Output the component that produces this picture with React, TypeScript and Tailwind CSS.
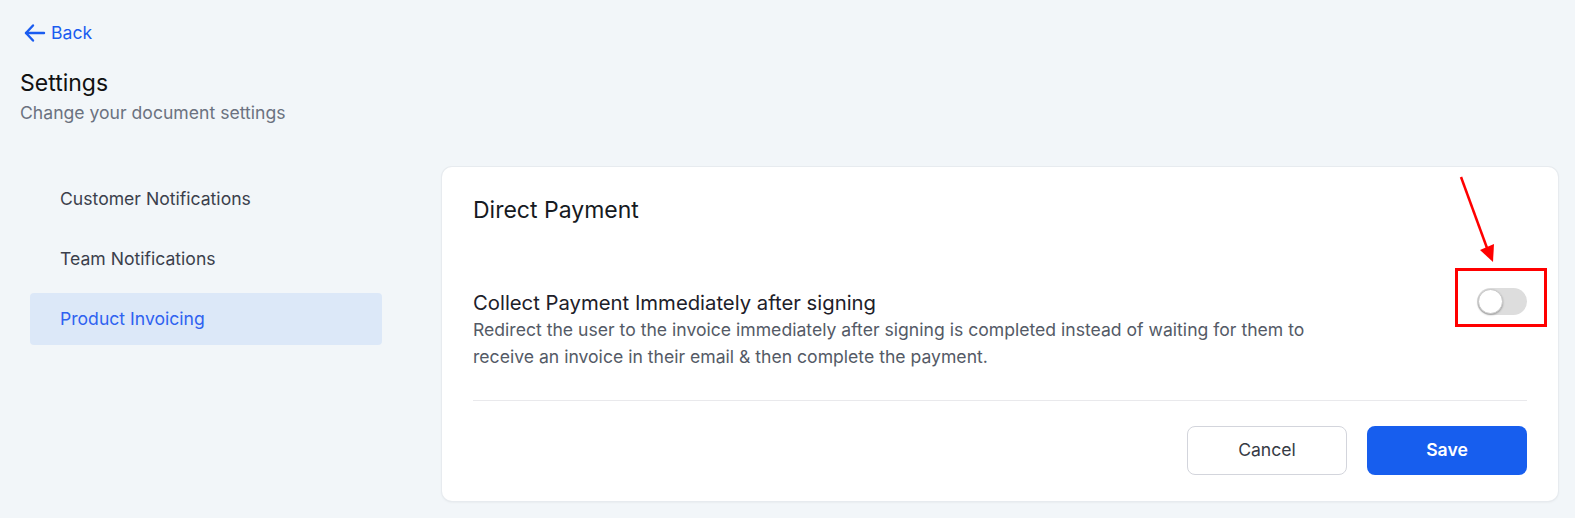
import React from "react";

const font = { fontFamily: "Inter, 'Noto Sans', sans-serif" };

function BackArrow() {
  return (
    <svg width="24" height="24" viewBox="0 0 24 24" fill="none" stroke="currentColor" strokeWidth="2.4" strokeLinecap="round" strokeLinejoin="round">
      <path d="M21 12H3" />
      <path d="M10 4.5L3 12l7 7.5" />
    </svg>
  );
}

const menu = ["Customer Notifications", "Team Notifications", "Product Invoicing"];

export default function App() {
  return (
    <div className="relative h-[518px] w-full overflow-hidden bg-[#f2f6f9]" style={font}>
      <div className="pl-5 pt-[21px]">
        <button className="flex h-6 items-center gap-[4px] pl-[3px] text-[17.6px] text-[#1a5cf0]">
          <BackArrow />
          <span>Back</span>
        </button>
        <h1 className="mt-[23px] text-[23px] leading-[30px] text-[#111111]">Settings</h1>
        <p className="mt-[2px] text-[17.6px] leading-[26px] text-[#6b7280]">Change your document settings</p>
      </div>

      <div className="mt-[41px] flex pl-[30px] pr-[17px]">
        <nav className="mt-[6px] flex w-[352px] shrink-0 flex-col gap-2">
          {menu.map((m, i) => (
            <div
              key={m}
              className={
                i === 2
                  ? "flex h-[52px] items-center rounded-[4px] bg-[#dce8f8] pl-[30px] text-[17.6px] text-[#2f62f0]"
                  : "flex h-[52px] items-center pl-[30px] text-[17.6px] text-[#3b3f4c]"
              }
            >
              {m}
            </div>
          ))}
        </nav>

        <section className="ml-[60px] flex h-[334px] flex-1 flex-col rounded-[10px] bg-white px-[31px] pt-[28px] shadow-[0_0_0_1px_#e7ebef,0_1px_3px_rgba(0,0,0,0.08)]">
          <h2 className="text-[23px] leading-[30px] text-[#161a22]">Direct Payment</h2>

          <div className="mt-[65px] flex items-start justify-between">
            <div className="w-[850px]">
              <h3 className="text-[20.3px] leading-[26px] text-[#1d2029]">Collect Payment Immediately after signing</h3>
              <p className="text-[17.6px] leading-[27px] text-[#545a66]">
                Redirect the user to the invoice immediately after signing is completed instead of waiting for them to receive an invoice in their email &amp; then complete the payment.
              </p>
            </div>
            <div className="mt-[-2px] flex h-[27px] w-[50px] items-center rounded-full bg-[#dddddd] p-[1px]">
              <div className="h-[25px] w-[25px] rounded-full border border-[#c8c8c8] bg-white shadow-[0_1px_2px_rgba(0,0,0,0.3)]" />
            </div>
          </div>

          <div className="mt-[30px] h-px w-full bg-[#e9e9ec]" />

          <div className="mt-[25px] flex justify-end gap-5">
            <button className="h-[49px] w-[160px] rounded-[8px] border border-[#d3d5dc] bg-white text-[17.6px] text-[#363a45]">
              Cancel
            </button>
            <button className="h-[49px] w-[160px] rounded-[8px] bg-[#175eee] text-[17.6px] font-semibold text-white">
              Save
            </button>
          </div>
        </section>
      </div>

      {/* annotation overlay */}
      <div className="absolute left-[1455px] top-[268px] h-[59px] w-[92px] border-[3px] border-[#ff0000]" />
      <svg className="absolute left-0 top-0" width="1575" height="518" viewBox="0 0 1575 518" fill="none">
        <path d="M1461 177 L1487 248" stroke="#ff0000" strokeWidth="2.5" />
        <path d="M1480 250 L1493 262 L1494 244 Z" fill="#ff0000" />
      </svg>
    </div>
  );
}
